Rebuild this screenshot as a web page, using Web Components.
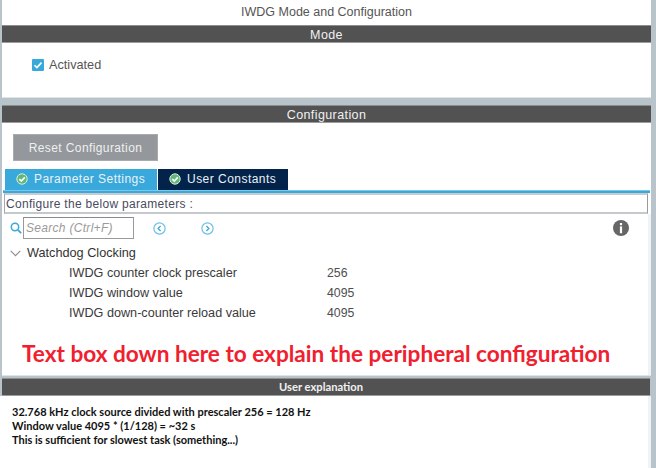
<!DOCTYPE html>
<html><head><meta charset="utf-8">
<style>
html,body{margin:0;padding:0;background:#fff}
body{width:656px;height:468px;overflow:hidden;font-family:"Liberation Sans",Arial,sans-serif}
</style></head><body>
<iwdg-app></iwdg-app>
<script>
function def(name, html){
  customElements.define(name, class extends HTMLElement{
    constructor(){super();this.attachShadow({mode:'open'}).innerHTML=html;}
  });
}
const check=`<svg width="12" height="12" viewBox="0 0 12 12" style="flex:none"><circle cx="6" cy="6" r="5.200" fill="#5fb87a" stroke="#d8eedd" stroke-width="1"/><path d="M3.300 6.100l2 2 3.500-3.700" fill="none" stroke="#fff" stroke-width="1.700"/></svg>`;

def('bar-head',`<style>:host{display:block;height:18px;box-sizing:border-box;background:#515251;border-top:1px solid #8b8e8e;border-bottom:1px solid #9a9d9d;color:#f1f1f1;text-align:center;font-size:12.500px;line-height:18px;letter-spacing:.4px}</style><slot></slot>`);

def('tab-btn',`<style>:host{display:flex;align-items:center;box-sizing:border-box;height:21px;color:#e9f2f7;font-size:12px;letter-spacing:.47px;padding:0 0 2px 11px;gap:6px;background:var(--bg);white-space:nowrap}</style>${check}<slot></slot>`);

def('param-row',`<style>:host{display:flex;height:20px;align-items:center;font-size:12.650px;color:#3a3a3a;padding-left:67px}
.n{width:258px}.v{color:#4e4e4e;font-size:12.300px}</style><span class="n"><slot name="n"></slot></span><span class="v"><slot name="v"></slot></span>`);

def('iwdg-app',`<style>
:host{display:flex;flex-direction:column;height:468px;box-sizing:border-box;background:#b9c4ca;padding:0 5px 0 2px;font-family:"Liberation Sans",Arial,sans-serif}
.title{height:25px;background:#fff;text-align:center;font-size:12.500px;line-height:25px;color:#555;flex:none}
.mode{height:54px;background:#fff;flex:none;padding:15px 0 0 30px;box-sizing:border-box;display:flex;align-items:flex-start;gap:5px;font-size:12.700px;color:#555;line-height:14px}
.gap{height:8px;flex:none;border-top:1px solid #dfe5e7;box-sizing:border-box}
.cfg{flex:none;height:252px;background:#fff;display:flex;flex-direction:column;box-sizing:border-box}
.reset{margin:11px 0 0 11px;width:145px;height:27px;box-sizing:border-box;background:#94979b;border:1px solid #a9acaf;color:#eff0f1;font-size:12px;letter-spacing:.4px;display:flex;align-items:center;justify-content:center;flex:none}
.tabs{display:flex;margin:8px 0 0 3px;flex:none;gap:1px}
.tabs .a{--bg:#39a9dc;width:152px}
.tabs .b{--bg:#03234b;width:130px}
.rule{height:3px;flex:none;background:#39a9dc;margin:0 0 0 1px;border-top:1px solid #7cc8ea;box-sizing:border-box;width:647px}
.conf{height:21px;flex:none;margin:0 0 0 2px;width:644px;box-sizing:border-box;border:1px solid #a4a8aa;border-top:2px solid #c8cccf;border-bottom:2px solid #c4c9cc;border-right-color:#999;font-size:12px;letter-spacing:.3px;color:#4a4a5e;line-height:18px;padding-left:1px;white-space:nowrap}
.lower{flex:1;display:flex;flex-direction:column;border-right:3px solid #f0f3f4;min-height:0}
.tools{display:flex;align-items:center;height:22px;flex:none;margin-top:3px;padding-left:8px}
.search{width:111px;height:22px;box-sizing:border-box;border:1px solid #999;border-top-color:#8a8a8a;margin-left:1px;font-style:italic;font-size:12px;color:#9a9a9a;line-height:20px;padding-left:2px;letter-spacing:.3px}
.nav{margin-left:19px;display:flex;gap:35px}
.info{margin-left:auto;margin-right:19px;display:flex}
.tree{display:flex;align-items:center;height:20px;margin-top:4px;padding-left:8px;font-size:12.700px;color:#333;gap:6px}
.rows{display:block}
.note{font-family:Lato,"Open Sans",sans-serif;font-weight:700;color:#f0202e;font-size:22.600px;line-height:26px;margin:18px 0 0 20px;white-space:nowrap}
.sep{height:3px;flex:none;border-top:1px solid #dfe5e7;box-sizing:border-box}
.ubar{font-size:11.200px;font-weight:700;font-family:Lato,sans-serif;letter-spacing:0;margin-right:1px;padding-right:10px;line-height:16px}
.ex{flex:1;background:#fff;border-right:3px solid #f0f3f4;padding:9px 0 0 12px;margin-left:-2px;font-family:Lato,sans-serif;font-weight:700;font-size:11px;line-height:14px;color:#111;white-space:nowrap}
.ex div{height:14px}
</style>
<div class="title">IWDG Mode and Configuration</div>
<bar-head>Mode</bar-head>
<div class="mode">
<svg width="12" height="12" viewBox="0 0 12 12" style="margin-top:1px;flex:none"><rect width="12" height="12" rx="1" fill="#39a9dc"/><path d="M2.500 6.200l2.400 2.400 4.600-5" fill="none" stroke="#fff" stroke-width="1.600"/></svg>
<span>Activated</span></div>
<div class="gap"></div>
<bar-head>Configuration</bar-head>
<div class="cfg">
<div class="reset">Reset Configuration</div>
<div class="tabs"><tab-btn class="a">Parameter Settings</tab-btn><tab-btn class="b">User Constants</tab-btn></div>
<div class="rule"></div>
<div class="conf">Configure the below parameters :</div>
<div class="lower">
<div class="tools">
<svg width="12" height="12" viewBox="0 0 12 12"><circle cx="5" cy="5" r="3.700" fill="none" stroke="#39a9dc" stroke-width="1.500"/><path d="M7.800 7.800l3.400 3.400" stroke="#39a9dc" stroke-width="1.700"/></svg>
<div class="search">Search (Ctrl+F)</div>
<div class="nav">
<svg width="13" height="13" viewBox="0 0 13 13"><circle cx="6.500" cy="6.500" r="5.600" fill="none" stroke="#6ec0e6" stroke-width="1.200"/><path d="M7.600 4L5.100 6.500l2.500 2.500" fill="none" stroke="#39a9dc" stroke-width="1.300"/></svg>
<svg width="13" height="13" viewBox="0 0 13 13"><circle cx="6.500" cy="6.500" r="5.600" fill="none" stroke="#6ec0e6" stroke-width="1.200"/><path d="M5.400 4l2.500 2.500L5.400 9" fill="none" stroke="#39a9dc" stroke-width="1.300"/></svg>
</div>
<svg class="info" width="16" height="16" viewBox="0 0 16 16"><circle cx="8" cy="8" r="8" fill="#666"/><rect x="6.900" y="3" width="2.200" height="2.200" fill="#fff"/><rect x="6.900" y="6.400" width="2.200" height="6.800" fill="#fff"/></svg>
</div>
<div class="tree"><svg width="11" height="7" viewBox="0 0 11 7"><path d="M.7.8l4.800 4.800L10.300.8" fill="none" stroke="#888" stroke-width="1.100"/></svg><span>Watchdog Clocking</span></div>
<div class="rows">
<param-row><span slot="n">IWDG counter clock prescaler</span><span slot="v">256</span></param-row>
<param-row><span slot="n">IWDG window value</span><span slot="v">4095</span></param-row>
<param-row><span slot="n">IWDG down-counter reload value</span><span slot="v">4095</span></param-row>
</div>
<div class="note">Text box down here to explain the peripheral configuration</div>
</div>
</div>
<div class="sep"></div>
<bar-head class="ubar">User explanation</bar-head>
<div class="ex"><div>32.768 kHz clock source divided with prescaler 256 = 128 Hz</div><div>Window value 4095 * (1/128) = ~32 s</div><div>This is sufficient for slowest task (something...)</div></div>
`);
</script>
</body></html>
